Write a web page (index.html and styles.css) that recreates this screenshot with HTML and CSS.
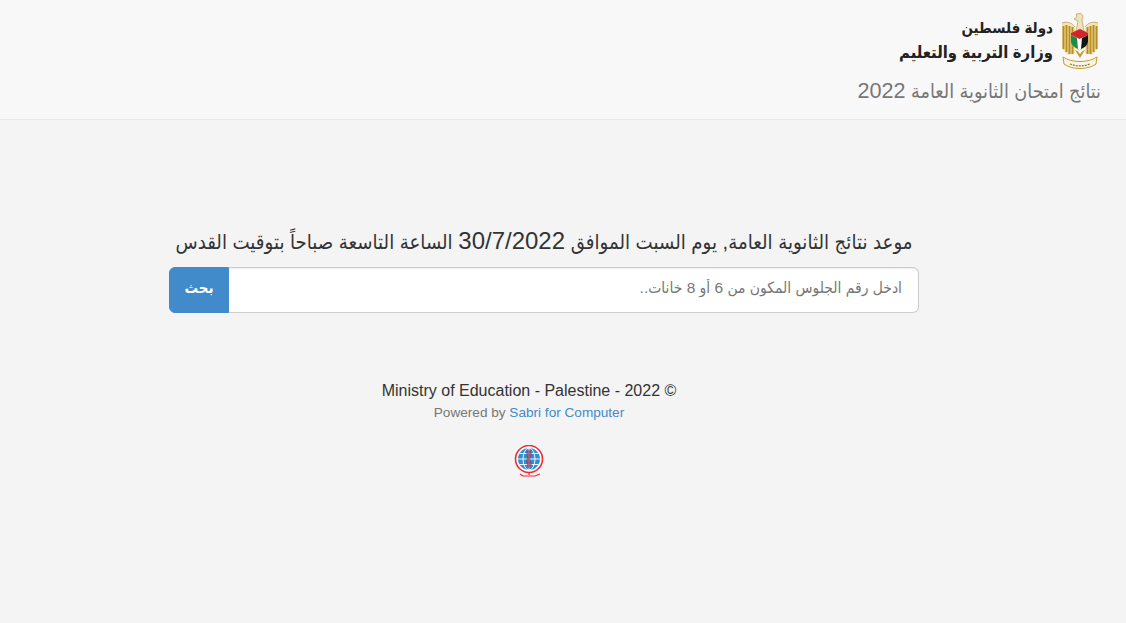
FILE: index.html
```html
<!DOCTYPE html>
<html lang="ar" dir="rtl">
<head>
  <meta charset="UTF-8" />
  <meta name="viewport" content="width=device-width, initial-scale=1.0"/>
  <title>نتائج امتحان الثانوية العامة 2022</title>
  <link rel="stylesheet" href="styles.css">
</head>
<body>
  <header class="navbar">
    <div class="brand">
      <svg class="emblem" viewBox="0 0 38 57" width="38" height="57" aria-hidden="true">
        <path d="M1 10 C6 9 11 11 14 15 L14 40 L7 42 L1 36 Z" fill="#f3e3b0"/>
        <path d="M37 10 C32 9 27 11 24 15 L24 40 L31 42 L37 36 Z" fill="#f3e3b0"/>
        <path d="M2.500 13 V36 M5.500 12 V39 M8.500 13 V41 M11.500 14 V41 M35.500 13 V36 M32.500 12 V39 M29.500 13 V41 M26.500 14 V41" stroke="#b98d22" stroke-width="2" fill="none"/>
        <path d="M1 10 C6 8 11 10 14 14 M37 10 C32 8 27 10 24 14" stroke="#b9964a" stroke-width=".8" fill="none"/>
        <path d="M15 1 L20 0.500 L22 3 L21 7 L23 18 L15 18 L17 8 L13 6 L16 4 Z" fill="#efe3bd" stroke="#b08e3c" stroke-width=".6"/>
        <path d="M10 20 L19 16 L27 20 L27 28 C27 32 23 35 18.500 37 C14 35 10 32 10 28 Z" fill="#fff" stroke="#d9b75c" stroke-width=".6"/>
        <path d="M10 20 L19 16 L27 20 L27 22 L18.500 26 L10 22 Z" fill="#d3242b"/>
        <path d="M10 22 L16 25 L17 36 C13 34 10 32 10 28 Z" fill="#1f8a45"/>
        <path d="M27 22 L21 25 L20 36 C24 34 27 32 27 28 Z" fill="#141414"/>
        <path d="M14 37 L19 45 L24 37 L21.500 38 L19 41 L16.500 38 Z" fill="#c79a32"/>
        <path d="M2 44 C10 50 28 50 36 44 L35 51 C27 57 11 57 3 51 Z" fill="#fbf6e4" stroke="#c79a32" stroke-width="1"/>
        <path d="M9 51 C15 53.500 23 53.500 29 51" stroke="#8d7434" stroke-width="1.300" stroke-dasharray="2 1" fill="none"/>
      </svg>
      <div class="brand-text">
        <div class="state">دولة فلسطين</div>
        <div class="ministry">وزارة التربية والتعليم</div>
      </div>
    </div>
    <div class="subtitle">نتائج امتحان الثانوية العامة <span class="num">2022</span></div>
  </header>

  <main class="content">
    <form class="search">
      <h1 class="notice">موعد نتائج الثانوية العامة, يوم السبت الموافق <span class="num">30/7/2022</span> الساعة التاسعة صباحاً بتوقيت القدس</h1>
      <div class="input-group">
        <input type="text" class="seat-input" placeholder="ادخل رقم الجلوس المكون من 6 أو 8 خانات..">
        <button type="submit" class="search-btn">بحث</button>
      </div>
    </form>

    <footer class="footer" dir="ltr">
      <p class="copy">Ministry of Education - Palestine - 2022 ©</p>
      <p class="powered">Powered by <a href="#">Sabri for Computer</a></p>
      <svg class="globe" viewBox="0 0 30 32" width="30" height="32" aria-hidden="true">
        <circle cx="15" cy="14" r="13.500" fill="#fff" stroke="#ee2a35" stroke-width="1.600"/>
        <circle cx="15" cy="14" r="11" fill="#2f8fd0"/>
        <path d="M4 14 H26 M5.500 8.500 H24.500 M5.500 19.500 H24.500 M15 3 V25" stroke="#fff" stroke-width=".9" fill="none"/>
        <ellipse cx="15" cy="14" rx="6" ry="11" stroke="#fff" stroke-width=".9" fill="none"/>
        <path d="M12 6 L17 5 L18 10 L16 14 L18 19 L15 24 L12 18 L13 13 Z" fill="#9c3f6a" opacity=".75"/>
        <path d="M15 27 V30 M6 29 L9 31 H21 L26 29" stroke="#ee2a35" stroke-width="1.200" fill="none"/>
      </svg>
    </footer>
  </main>
</body>
</html>
```
FILE: styles.css
```css
* {
  box-sizing: border-box;
}

body {
  margin: 0;
  min-height: 100vh;
  background: #f4f4f4;
  color: #333;
  font-family: "Liberation Sans", "DejaVu Sans Condensed", "DejaVu Sans", sans-serif;
  font-size: 14px;
}

.navbar {
  height: 120px;
  padding: 13px 25px 0;
  background: #f8f8f8;
  border-bottom: 1px solid #e7e7e7;
}

.brand {
  display: flex;
  align-items: center;
  gap: 8px;
  height: 57px;
  padding-right: 2px;
}

.emblem {
  flex: none;
}

.brand-text {
  padding-bottom: 4px;
  color: #222;
  font-weight: bold;
}

.state {
  font-size: 15px;
  line-height: 24px;
}

.ministry {
  font-size: 16.500px;
  line-height: 24px;
}

.subtitle {
  margin-top: 6px;
  color: #777;
  font-size: 19.600px;
  line-height: 30px;
}

.subtitle .num {
  font-size: 21.600px;
}

.content {
  width: 750px;
  margin-right: 207px;
  padding-top: 106px;
}

.notice {
  margin: 0 0 10px;
  color: #333;
  font-size: 20.200px;
  font-weight: normal;
  line-height: 30px;
  text-align: center;
  white-space: nowrap;
}

.notice .num {
  font-size: 24px;
}

.input-group {
  display: flex;
  height: 46px;
}

.seat-input {
  flex: 1;
  min-width: 0;
  padding: 0 16px 4px;
  background: #fff;
  border: 1px solid #ccc;
  border-left: none;
  border-radius: 0 6px 6px 0;
  box-shadow: inset 0 1px 1px rgba(0, 0, 0, 0.075);
  color: #555;
  font-family: inherit;
  font-size: 15.500px;
  outline: none;
}

.seat-input::placeholder {
  color: #777;
  opacity: 1;
}

.search-btn {
  flex: none;
  width: 60px;
  padding: 0 0 4px;
  background: #428bca;
  border: 1px solid #428bca;
  border-radius: 6px 0 0 6px;
  color: #fff;
  font-family: inherit;
  font-size: 15px;
  font-weight: bold;
  cursor: pointer;
}

.footer {
  width: 420px;
  margin: 66px 180px 0 0;
  text-align: center;
}

.copy {
  margin: 0;
  color: #333;
  font-size: 16px;
  line-height: 24px;
}

.powered {
  margin: 0;
  color: #777;
  font-size: 13.600px;
  line-height: 19px;
}

.powered a {
  color: #428bca;
  text-decoration: none;
}

.globe {
  display: block;
  margin: 23px auto 0;
}
```
